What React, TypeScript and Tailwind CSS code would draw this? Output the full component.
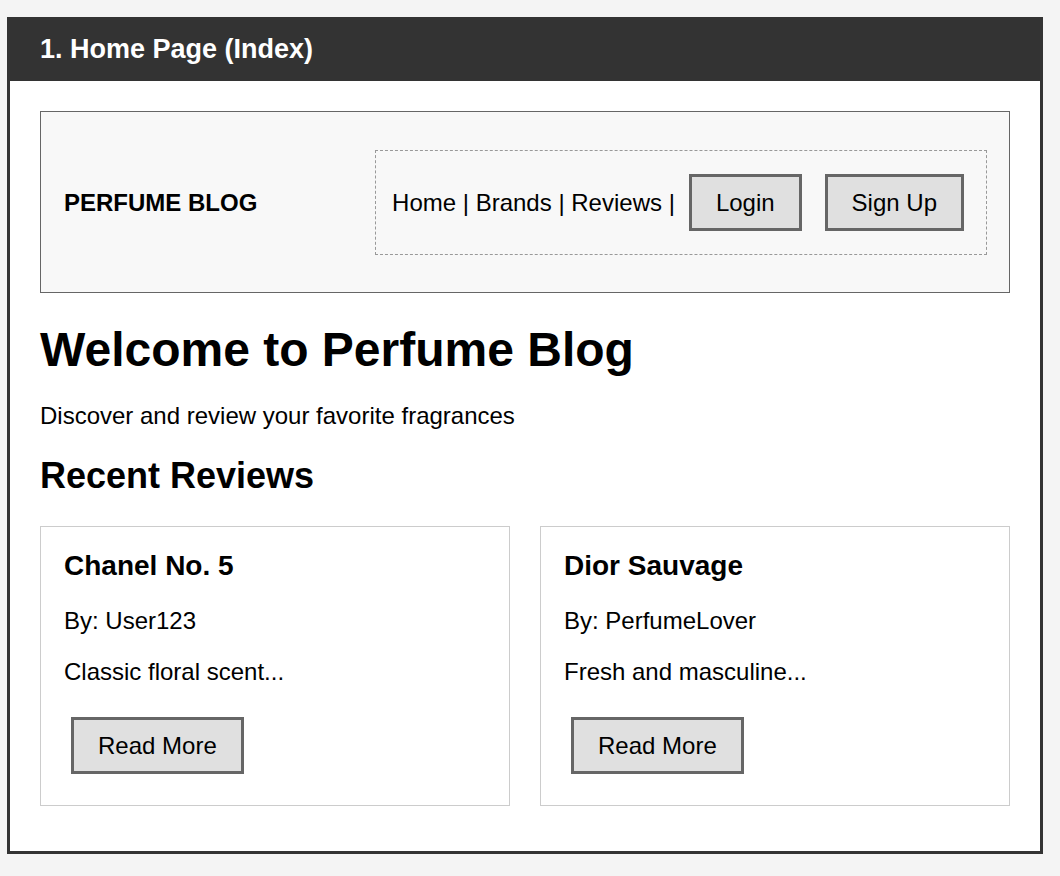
import React from "react";

// --- Datos de las reseñas ---
type Review = {
    title: string;
    author: string;
    excerpt: string;
};

const REVIEWS: Review[] = [
    { title: "Chanel No. 5", author: "User123", excerpt: "Classic floral scent..." },
    { title: "Dior Sauvage", author: "PerfumeLover", excerpt: "Fresh and masculine..." },
];

function GreyButton({ label, className = "" }: { label: string; className?: string }) {
    return (
        <button
            type="button"
            className={`border-[3px] border-[#666] bg-[#e0e0e0] px-[24px] py-[12px] text-[24px] leading-[27.6px] text-black ${className}`}
        >
            {label}
        </button>
    );
}

function SiteNav() {
    return (
        <nav className="flex h-[182px] items-center justify-between border border-[#666] bg-[#f8f8f8] pl-[23px] pr-[22px]">
            <div className="text-[24px] font-bold leading-[27px] text-black">PERFUME BLOG</div>
            <div className="mt-[1px] flex items-center border border-dashed border-[#999] py-[23px] pl-[16px] pr-[22px]">
                <span className="text-[24px] leading-[27.6px] text-black">Home | Brands | Reviews |</span>
                <GreyButton label="Login" className="ml-[14px]" />
                <GreyButton label="Sign Up" className="ml-[23px]" />
            </div>
        </nav>
    );
}

function ReviewCard({ review }: { review: Review }) {
    return (
        <div className="border border-[#ccc] bg-white px-[23px] pt-[23px] pb-[31px]">
            <h3 className="text-[28px] font-bold leading-[32.2px] text-black">{review.title}</h3>
            <p className="mt-[25px] text-[24px] leading-[27.6px] text-black">By: {review.author}</p>
            <p className="mt-[23px] text-[24px] leading-[27.6px] text-black">{review.excerpt}</p>
            <GreyButton label="Read More" className="ml-[7px] mt-[31px]" />
        </div>
    );
}

export default function App() {
    return (
        <div className="min-h-[876px] bg-[#f4f4f4] pt-[17px] pl-[7px] font-['Liberation_Sans',Arial,sans-serif]">
            <div className="w-[1036px] border-x-[3px] border-b-[3px] border-[#333] bg-white">
                {/* Cabecera de la sección */}
                <div className="-mx-[3px] bg-[#333] pl-[33px] pt-[17px] pb-[16px]">
                    <h2 className="text-[27px] font-bold leading-[31px] text-white">1. Home Page (Index)</h2>
                </div>

                <div className="px-[30px] pt-[30px] pb-[45px]">
                    <SiteNav />

                    <h1 className="mt-[29px] text-[48px] font-bold leading-[55.2px] text-black">Welcome to Perfume Blog</h1>
                    <p className="mt-[25px] text-[24px] leading-[27.6px] text-black">Discover and review your favorite fragrances</p>
                    <h2 className="mt-[25px] text-[36px] font-bold leading-[41.4px] text-black">Recent Reviews</h2>

                    <div className="mt-[30px] grid grid-cols-2 gap-[30px]">
                        {REVIEWS.map((review) => (
                            <ReviewCard key={review.title} review={review} />
                        ))}
                    </div>
                </div>
            </div>
        </div>
    );
}
